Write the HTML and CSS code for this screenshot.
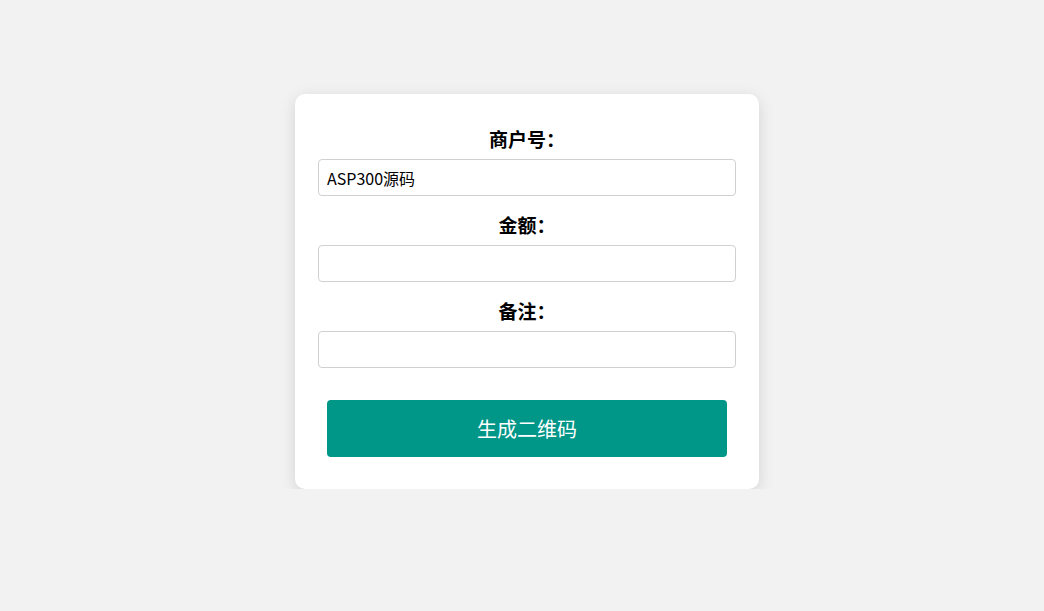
FILE: index.html
```html
<!DOCTYPE html>
<html lang="zh-CN">

<head>
    <meta charset="UTF-8" />
    <meta name="viewport" content="width=device-width, initial-scale=1.0" />
    <title>生成二维码</title>
    <link rel="stylesheet" href="styles.css">
</head>

<body>
    <div class="box">
        <form class="frm">
            <label class="lbl" for="mch">商户号：</label>
            <input class="ipt" type="text" id="mch" value="ASP300源码">

            <label class="lbl" for="amt">金额：</label>
            <input class="ipt" type="text" id="amt">

            <label class="lbl" for="rmk">备注：</label>
            <input class="ipt" type="text" id="rmk">

            <button class="btn" type="button">生成二维码</button>
        </form>
    </div>
</body>

</html>
```

FILE: styles.css
```css
body {
    margin: 0;
    background: #f2f2f2;
    font-family: "Noto Sans CJK SC", "Noto Sans", sans-serif;
}

.box {
    width: 464px;
    margin: 94px 0 0 calc(50% - 227px);
    padding: 32px 23px 32px;
    box-sizing: border-box;
    background: #fff;
    border-radius: 10px;
    box-shadow: 0 4px 16px rgba(0, 0, 0, 0.13);
}

.frm {
    display: flex;
    flex-direction: column;
}

.lbl {
    font-size: 19px;
    font-weight: bold;
    line-height: 26px;
    text-align: center;
    color: #000;
    margin-bottom: 7px;
}

.ipt {
    height: 37px;
    box-sizing: border-box;
    border: 1px solid #d0d0d0;
    border-radius: 4px;
    padding: 0 8px;
    font-size: 16px;
    font-family: "Noto Sans CJK SC", "Noto Sans", sans-serif;
    color: #000;
    margin-bottom: 16px;
}

.btn {
    width: 400px;
    height: 57px;
    margin: 16px auto 0;
    border: none;
    border-radius: 4px;
    background: #009688;
    color: #fff;
    font-size: 20px;
    font-family: "Noto Sans CJK SC", "Noto Sans", sans-serif;
    cursor: pointer;
}
```
